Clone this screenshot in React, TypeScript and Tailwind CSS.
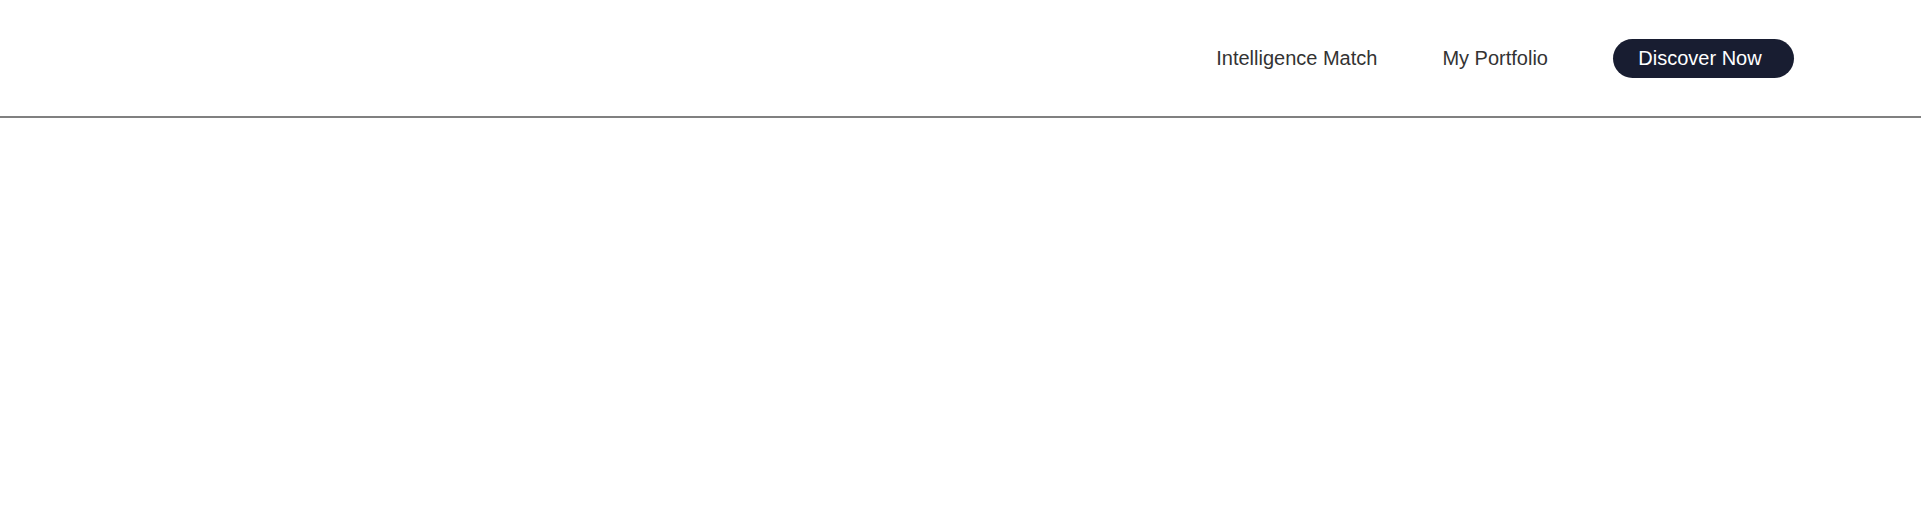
export default function App() {
  return (
    <div className="min-h-[520px] w-full bg-white" style={{ fontFamily: '"Liberation Sans", Arial, sans-serif' }}>
      <header className="flex h-[118px] items-center justify-end border-b-2 border-[#808080] pr-[127px]">
        <nav className="flex items-center gap-[65px]">
          <a className="ml-[2px] text-[20px] leading-none text-[#333333]">Intelligence Match</a>
          <a className="text-[20px] leading-none text-[#333333]">My Portfolio</a>
          <button className="flex h-[39px] w-[181px] items-center justify-center rounded-full bg-[#181d31] pr-[7px] text-[20px] leading-none text-white">
            Discover Now
          </button>
        </nav>
      </header>
    </div>
  );
}
